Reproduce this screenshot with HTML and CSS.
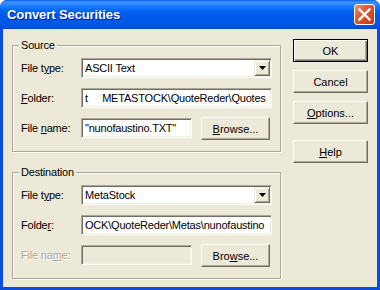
FILE: index.html
```html
<!DOCTYPE html>
<html>
<head>
<meta charset="utf-8">
<title>Convert Securities</title>
<link rel="stylesheet" href="styles.css">
</head>
<body>
<div class="window">
  <div class="titlebar">
    <span class="title">Convert Securities</span>
    <button class="close" aria-label="Close">
      <svg width="19" height="19" viewBox="0 0 19 19"><path d="M4.5 4.5 L14.5 14.5 M14.5 4.5 L4.5 14.5" stroke="#fff" stroke-width="2.4" stroke-linecap="square" fill="none"/></svg>
    </button>
  </div>
  <div class="client">
    <div class="groups">
      <fieldset class="group">
        <legend>Source</legend>
        <div class="row">
          <span class="lbl">File t<u>y</u>pe:</span>
          <div class="combo"><span class="val">ASCII Text</span><span class="drop"><svg width="7" height="4" viewBox="0 0 7 4"><path d="M0 0H7L3.5 4Z" fill="#000"/></svg></span></div>
        </div>
        <div class="row">
          <span class="lbl"><u>F</u>older:</span>
          <div class="edit wide"><span class="val">t     METASTOCK\QuoteReder\Quotes</span></div>
        </div>
        <div class="row">
          <span class="lbl">File <u>n</u>ame:</span>
          <div class="edit short"><span class="val">"nunofaustino.TXT"</span></div>
          <button class="btn browse"><u>B</u>rowse...</button>
        </div>
      </fieldset>
      <fieldset class="group">
        <legend>Destination</legend>
        <div class="row">
          <span class="lbl">File t<u>y</u>pe:</span>
          <div class="combo"><span class="val">MetaStock</span><span class="drop"><svg width="7" height="4" viewBox="0 0 7 4"><path d="M0 0H7L3.5 4Z" fill="#000"/></svg></span></div>
        </div>
        <div class="row">
          <span class="lbl">Folde<u>r</u>:</span>
          <div class="edit wide"><span class="val">OCK\QuoteReder\Metas\nunofaustino</span></div>
        </div>
        <div class="row">
          <span class="lbl disabled">File na<u>m</u>e:</span>
          <div class="edit short disabled"></div>
          <button class="btn browse">Bro<u>w</u>se...</button>
        </div>
      </fieldset>
    </div>
    <div class="buttons">
      <button class="btn default">OK</button>
      <button class="btn cancel">Cancel</button>
      <button class="btn options"><u>O</u>ptions...</button>
      <button class="btn help"><u>H</u>elp</button>
    </div>
  </div>
</div>
</body>
</html>
```

FILE: styles.css
```css
* { box-sizing: border-box; }

body {
  margin: 0;
  width: 380px;
  height: 290px;
  background: #ffffff;
  font-family: "Liberation Sans", Arial, sans-serif;
  font-size: 11px;
  letter-spacing: -0.2px;
  color: #000;
}

.window {
  width: 380px;
  height: 290px;
  display: flex;
  flex-direction: column;
  background: #0A4BE2;
  border-radius: 7px 7px 0 0;
  overflow: hidden;
}

.titlebar {
  height: 29px;
  flex: none;
  display: flex;
  align-items: center;
  padding: 0 5px 0 7px;
  background: linear-gradient(to bottom,
    #0A5AE8 0px, #3D93FF 2px, #2A89FF 4px, #1479FB 7px,
    #0663F2 11px, #0058EA 16px, #0057E8 22px, #0054E2 26px, #0046D2 29px);
}

.title {
  color: #fff;
  font-weight: bold;
  font-size: 13px;
  letter-spacing: -0.1px;
  text-shadow: 1px 1px 0 #0A1E8C;
}

.close {
  margin-left: auto;
  width: 21px;
  height: 21px;
  padding: 0;
  border: 1px solid #fff;
  border-radius: 3px;
  background: linear-gradient(135deg, #EE9A80 0%, #E0603D 35%, #D24A22 65%, #C23A16 100%);
  display: flex;
  align-items: center;
  justify-content: center;
}

.client {
  flex: 1;
  margin: 0 3px 3px;
  background: #ECE9D8;
  display: flex;
  gap: 12px;
  padding: 9px 9px 0;
}

.groups {
  width: 269px;
  display: flex;
  flex-direction: column;
  gap: 13px;
}

.group {
  margin: 0;
  min-width: 0;
  border: 1px solid #ACA899;
  box-shadow: 1px 1px 0 #fff, inset 1px 1px 0 #fff;
  padding: 6px 8px 13px;
}

.group legend {
  padding: 0 2px;
  margin-left: -2px;
  line-height: 14px;
  background: #ECE9D8;
}

.row {
  display: flex;
  align-items: center;
  height: 20px;
}

.row + .row { margin-top: 10px; }

.lbl {
  width: 60px;
  flex: none;
  white-space: nowrap;
}

.disabled.lbl {
  color: #ACA899;
  text-shadow: 1px 1px 0 #fff;
}

.edit, .combo {
  height: 20px;
  flex: none;
  display: flex;
  align-items: center;
  background: #fff;
  border: 1px solid;
  border-color: #ACA899 #fff #fff #ACA899;
  box-shadow: inset 1px 1px 0 #716F64, inset -1px -1px 0 #F1EFE2;
  padding: 0 1px 0 3px;
  overflow: hidden;
}

.val {
  flex: 1;
  white-space: pre;
  overflow: hidden;
}

.wide, .combo { width: 191px; }
.short { width: 111px; }

.edit.disabled { background: #ECE9D8; }

.drop {
  width: 16px;
  height: 16px;
  flex: none;
  display: flex;
  align-items: center;
  justify-content: center;
  background: #ECE9D8;
  border: 1px solid;
  border-color: #ECE9D8 #716F64 #716F64 #ECE9D8;
  box-shadow: inset 1px 1px 0 #fff, inset -1px -1px 0 #ACA899;
}

.btn {
  font: inherit;
  color: #000;
  height: 23px;
  padding: 0;
  background: #ECE9D8;
  border: 1px solid;
  border-color: #fff #716F64 #716F64 #fff;
  box-shadow: inset -1px -1px 0 #ACA899;
  border-radius: 0;
}

.btn.default {
  border: 1px solid #000;
  box-shadow: inset 1px 1px 0 #fff, inset -1px -1px 0 #716F64, inset -2px -2px 0 #ACA899;
}

.browse {
  width: 69px;
  margin: -1px 0 -2px 9px;
  flex: none;
}

.buttons {
  width: 75px;
  display: flex;
  flex-direction: column;
  padding-top: 1px;
}

.buttons .btn { width: 75px; }
.cancel, .options { margin-top: 8px; }
.help { margin-top: 16px; }
```
